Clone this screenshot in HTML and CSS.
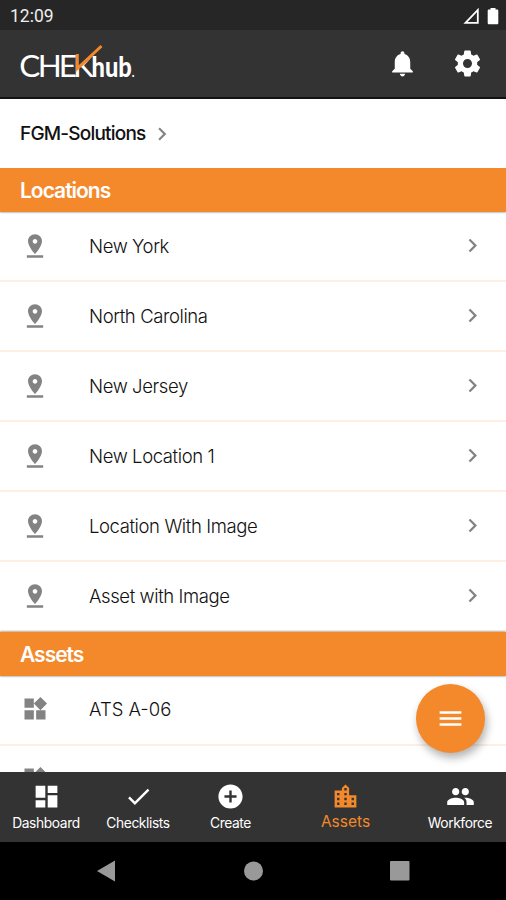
FILE: index.html
```html
<!DOCTYPE html>
<html lang="en">
<head>
  <meta charset="UTF-8" />
  <meta name="viewport" content="width=device-width, initial-scale=1" />
  <title>CHEKhub | Assets</title>
  <link rel="stylesheet" href="styles.css">
</head>
<body>
  <svg class="sprite" width="0" height="0">
    <symbol id="pin" viewBox="0 0 24 24"><path d="M18 8c0-3.31-2.69-6-6-6S6 4.69 6 8c0 4.5 6 11 6 11s6-6.500 6-11zm-8 0c0-1.100.9-2 2-2s2 .9 2 2-.89 2-2 2c-1.100 0-2-.9-2-2zM5 20v2h14v-2H5z"/></symbol>
    <symbol id="chevron" viewBox="0 0 24 24"><path d="M10 6L8.590 7.410 13.170 12l-4.580 4.590L10 18l6-6z"/></symbol>
    <symbol id="widgets" viewBox="0 0 24 24"><path d="M13 13v8h8v-8h-8zM3 21h8v-8H3v8zM3 3v8h8V3H3zm13.660-1.310L11 7.340 16.660 13l5.660-5.660-5.660-5.650z"/></symbol>
  </svg>

  <div class="status">
    <span>12:09</span>
    <div class="status-icons">
      <svg width="17" height="17" viewBox="0 0 17 17"><path d="M2.500 14.800H14.800V2z" fill="none" stroke="#fff" stroke-width="1.800"/></svg>
      <svg width="12" height="18" viewBox="0 0 12 18"><path d="M3.500 1h5v1.500H10c.8 0 1.300.5 1.300 1.300V16c0 .8-.5 1.300-1.300 1.300H2C1.200 17.300.7 16.800.7 16V3.800c0-.8.5-1.300 1.300-1.300h1.500z" fill="#fff"/></svg>
    </div>
  </div>

  <header>
    <svg class="logo" width="130" height="38" viewBox="0 0 130 38">
      <clipPath id="under-check"><path d="M-3 0H56V26H58.500L82 4V40H-3z"/></clipPath>
      <text class="logo-thin" x="-.7 17.700 38.700 53" y="33.500" clip-path="url(#under-check)">CHEK</text>
      <path class="logo-check" d="M57.300 11V25.500L81.500 3"/>
      <text class="logo-bold" x="71.500" y="33.500" textLength="43" lengthAdjust="spacingAndGlyphs">hub<tspan class="logo-dot">.</tspan></text>
    </svg>
    <div class="header-actions">
      <svg width="31" height="31" viewBox="0 0 24 24"><path d="M12 22c1.100 0 2-.9 2-2h-4c0 1.100.89 2 2 2zm6-6v-5c0-3.070-1.640-5.640-4.500-6.320V4c0-.83-.67-1.500-1.500-1.500s-1.500.67-1.500 1.500v.68C7.630 5.360 6 7.920 6 11v5l-2 2v1h16v-1l-2-2z"/></svg>
      <svg width="31" height="31" viewBox="0 0 24 24"><path d="M19.430 12.980c.04-.32.07-.64.07-.98s-.03-.66-.07-.98l2.110-1.650c.19-.15.24-.42.12-.64l-2-3.460c-.12-.22-.39-.3-.61-.22l-2.490 1c-.52-.4-1.080-.73-1.690-.98l-.38-2.650C14.460 2.180 14.250 2 14 2h-4c-.25 0-.46.18-.49.42l-.38 2.650c-.61.25-1.170.59-1.690.98l-2.490-1c-.23-.09-.49 0-.61.22l-2 3.460c-.13.22-.07.49.12.64l2.110 1.650c-.04.32-.07.65-.07.98s.03.66.07.98l-2.110 1.650c-.19.15-.24.42-.12.64l2 3.460c.12.22.39.3.61.22l2.490-1c.52.4 1.080.73 1.690.98l.38 2.650c.03.24.24.42.49.42h4c.25 0 .46-.18.49-.42l.38-2.650c.61-.25 1.170-.59 1.690-.98l2.490 1c.23.09.49 0 .61-.22l2-3.460c.12-.22.07-.49-.12-.64l-2.110-1.650zM12 15.500c-1.930 0-3.500-1.570-3.500-3.500s1.570-3.500 3.500-3.500 3.500 1.570 3.500 3.500-1.570 3.500-3.500 3.500z"/></svg>
    </div>
  </header>

  <div class="breadcrumb">
    <span>FGM-Solutions</span>
    <svg width="26" height="26"><use href="#chevron"/></svg>
  </div>

  <main>
    <h2><span>Locations</span></h2>
    <ul>
      <li><svg class="icon"><use href="#pin"/></svg><span>New York</span><svg class="arrow"><use href="#chevron"/></svg></li>
      <li><svg class="icon"><use href="#pin"/></svg><span>North Carolina</span><svg class="arrow"><use href="#chevron"/></svg></li>
      <li><svg class="icon"><use href="#pin"/></svg><span>New Jersey</span><svg class="arrow"><use href="#chevron"/></svg></li>
      <li><svg class="icon"><use href="#pin"/></svg><span>New Location 1</span><svg class="arrow"><use href="#chevron"/></svg></li>
      <li><svg class="icon"><use href="#pin"/></svg><span>Location With Image</span><svg class="arrow"><use href="#chevron"/></svg></li>
      <li><svg class="icon"><use href="#pin"/></svg><span>Asset with Image</span><svg class="arrow"><use href="#chevron"/></svg></li>
    </ul>
    <h2><span>Assets</span></h2>
    <ul class="assets">
      <li><svg class="icon"><use href="#widgets"/></svg><span>ATS A-06</span></li>
      <li><svg class="icon"><use href="#widgets"/></svg><span>Asset A</span></li>
    </ul>
    <button class="fab" aria-label="Menu">
      <svg width="29" height="29" viewBox="0 0 24 24"><path d="M3 18h18v-2H3v2zm0-5h18v-2H3v2zm0-7v2h18V6H3z"/></svg>
    </button>
  </main>

  <nav>
    <a>
      <svg viewBox="0 0 24 24"><path d="M3 13h8V3H3v10zm0 8h8v-6H3v6zm10 0h8V11h-8v10zm0-18v6h8V3h-8z"/></svg>
      <span>Dashboard</span>
    </a>
    <a>
      <svg viewBox="0 0 24 24"><path d="M9 16.170L4.830 12l-1.420 1.410L9 19 21 7l-1.410-1.410z"/></svg>
      <span>Checklists</span>
    </a>
    <a>
      <svg viewBox="0 0 24 24"><path d="M12 2C6.480 2 2 6.480 2 12s4.480 10 10 10 10-4.480 10-10S17.520 2 12 2zm5 11h-4v4h-2v-4H7v-2h4V7h2v4h4v2z"/></svg>
      <span>Create</span>
    </a>
    <a class="active">
      <svg viewBox="0 0 24 24"><path d="M15 11V5l-3-3-3 3v2H3v14h18V11h-6zm-8 8H5v-2h2v2zm0-4H5v-2h2v2zm0-4H5V9h2v2zm6 8h-2v-2h2v2zm0-4h-2v-2h2v2zm0-4h-2V9h2v2zm0-4h-2V5h2v2zm6 12h-2v-2h2v2zm0-4h-2v-2h2v2z"/></svg>
      <span>Assets</span>
    </a>
    <a>
      <svg viewBox="0 0 24 24"><path d="M16 11c1.660 0 2.990-1.340 2.990-3S17.660 5 16 5s-3 1.340-3 3 1.340 3 3 3zm-8 0c1.660 0 2.990-1.340 2.990-3S9.660 5 8 5 5 6.340 5 8s1.340 3 3 3zm0 2c-2.330 0-7 1.170-7 3.500V19h14v-2.500c0-2.330-4.670-3.500-7-3.500zm8 0c-.29 0-.62.02-.97.05 1.160.84 1.970 1.970 1.970 3.450V19h6v-2.500c0-2.330-4.670-3.500-7-3.500z"/></svg>
      <span>Workforce</span>
    </a>
  </nav>

  <footer>
    <svg width="20" height="22" viewBox="0 0 20 22"><path d="M1 11L19 .5v21z"/></svg>
    <svg width="20" height="20" viewBox="0 0 20 20"><circle cx="10.500" cy="10" r="9.500"/></svg>
    <svg width="20" height="20" viewBox="0 0 20 20"><rect width="19.500" height="19.500" rx="1"/></svg>
  </footer>
</body>
</html>
```
FILE: styles.css
```css
:root {
  --orange: #f4892c;
  --dark: #333333;
  --grey: #838383;
  --divider: #feeee3;
}

* {
  margin: 0;
  padding: 0;
  box-sizing: border-box;
}

body {
  font-family: Inter, Roboto, sans-serif;
  background: #fff;
  color: #111;
  height: 900px;
  display: flex;
  flex-direction: column;
  overflow: hidden;
}

svg {
  display: block;
  flex: none;
}

.sprite {
  position: absolute;
}

.status {
  height: 30px;
  padding: 2px 7px 0 10px;
  background: #262626;
  color: #eee;
  font-family: Roboto, sans-serif;
  font-size: 17.5px;
  display: flex;
  align-items: center;
  justify-content: space-between;
}

.status-icons {
  display: flex;
  gap: 7px;
  align-items: center;
}

header {
  height: 69px;
  padding: 0 23px 0 20px;
  background: var(--dark);
  border-bottom: 2px solid #111;
  display: flex;
  align-items: center;
  justify-content: space-between;
}

.logo {
  margin-top: -3px;
  fill: #fff;
  overflow: visible;
}

.logo-thin {
  font: 400 31.5px Lato, sans-serif;
}

.logo-bold {
  font: 900 29px Lato, sans-serif;
}

.logo-dot {
  font-size: 14px;
}

.logo-check {
  fill: none;
  stroke: var(--orange);
  stroke-width: 3;
}

.header-actions {
  display: flex;
  gap: 34px;
  fill: #fff;
}

.breadcrumb {
  height: 69px;
  padding-left: 20px;
  display: flex;
  align-items: center;
  gap: 3px;
  font-size: 19px;
  font-weight: 500;
  letter-spacing: -0.8px;
  fill: #858585;
}

main {
  flex: 1;
  min-height: 0;
  position: relative;
  overflow: hidden;
}

h2 {
  height: 44px;
  padding-left: 20px;
  display: flex;
  align-items: center;
  background: var(--orange);
  color: #fff;
  font-size: 21px;
  font-weight: 600;
  letter-spacing: -1px;
  box-shadow: 0 0 2px rgba(0, 0, 0, 0.6);
  position: relative;
}

ul {
  list-style: none;
}

li {
  height: 70px;
  padding: 0 20px 1px 21px;
  display: flex;
  align-items: center;
  border-bottom: 2px solid var(--divider);
  font-size: 18.5px;
  font-weight: 300;
  letter-spacing: -0.4px;
  fill: var(--grey);
}

.assets li {
  padding-bottom: 2px;
  letter-spacing: 0;
}

li span {
  flex: 1;
  margin-left: 40px;
}

.icon {
  width: 28px;
  height: 28px;
}

.arrow {
  width: 27px;
  height: 27px;
}

.fab {
  position: absolute;
  right: 21.5px;
  bottom: 19px;
  width: 69px;
  height: 69px;
  border: none;
  border-radius: 50%;
  background: var(--orange);
  box-shadow: 2px 5px 8px rgba(0, 0, 0, 0.3);
  fill: #fff;
  display: flex;
  align-items: center;
  justify-content: center;
}

nav {
  height: 70px;
  background: var(--dark);
  display: grid;
  grid-template-columns: 92px 92px 93px 137px 92px;
  position: relative;
}

nav a {
  display: flex;
  flex-direction: column;
  align-items: center;
  padding-top: 10px;
  color: #fff;
  fill: #fff;
  font-size: 13.8px;
  letter-spacing: -0.4px;
}

nav svg {
  width: 29px;
  height: 29px;
}

nav span {
  margin-top: 4px;
}

nav .active {
  color: var(--orange);
  fill: var(--orange);
  font-size: 15.5px;
  letter-spacing: 0;
}

nav .active span {
  margin-top: 1px;
}

footer {
  height: 58px;
  padding: 0 96px;
  background: #000;
  fill: #999;
  display: flex;
  align-items: center;
  justify-content: space-between;
}
```
